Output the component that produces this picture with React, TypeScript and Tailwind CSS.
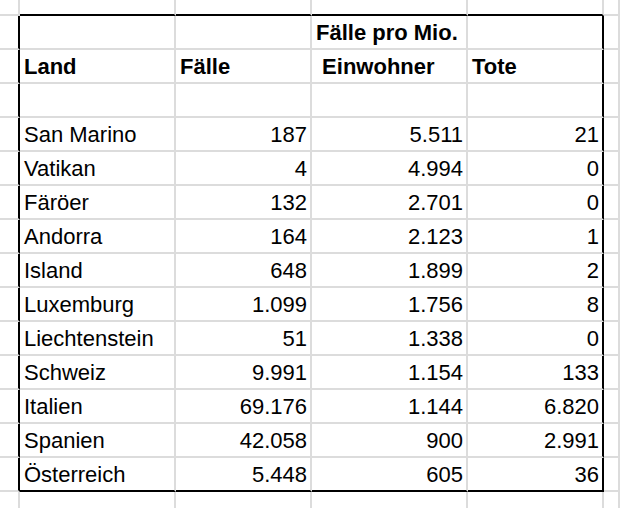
import React from "react";

// widths include the 2px right gridline of each column
const colWidths = ["w-[20px]", "w-[156px]", "w-[136px]", "w-[156px]", "w-[136px]", "flex-1"];

const rows: string[][] = [
  ["San Marino", "187", "5.511", "21"],
  ["Vatikan", "4", "4.994", "0"],
  ["Färöer", "132", "2.701", "0"],
  ["Andorra", "164", "2.123", "1"],
  ["Island", "648", "1.899", "2"],
  ["Luxemburg", "1.099", "1.756", "8"],
  ["Liechtenstein", "51", "1.338", "0"],
  ["Schweiz", "9.991", "1.154", "133"],
  ["Italien", "69.176", "1.144", "6.820"],
  ["Spanien", "42.058", "900", "2.991"],
  ["Österreich", "5.448", "605", "36"],
];

type CellProps = {
  col: number;
  height: string;
  bottomBlack?: boolean;
  rightBlack?: boolean;
  align?: "left" | "right";
  bold?: boolean;
  children?: React.ReactNode;
};

const Cell: React.FC<CellProps> = ({ col, height, bottomBlack, rightBlack, align = "left", bold, children }) => (
  <div
    className={[
      colWidths[col],
      height,
      "shrink-0 box-border flex items-end border-b-2 border-r-2 pb-[4px] whitespace-pre",
      bottomBlack ? "border-b-black" : "border-b-[#dcdcdc]",
      rightBlack ? "border-r-black" : "border-r-[#dcdcdc]",
      align === "right" ? "justify-end pr-[3px]" : "justify-start pl-[4px]",
      bold ? "font-bold" : "",
    ].join(" ")}
  >
    {children}
  </div>
);

const App: React.FC = () => {
  const header: string[][] = [
    ["", "", "Fälle pro Mio.", ""],
    ["Land", "Fälle", " Einwohner", "Tote"],
    ["", "", "", ""],
  ];

  return (
    <div
      className="w-[620px] h-[508px] overflow-hidden bg-white text-black text-[22px] leading-[22px]"
      style={{ fontFamily: '"Liberation Sans", Arial, sans-serif' }}
    >
      {/* partial row above the table */}
      <div className="flex">
        {[0, 1, 2, 3, 4, 5].map((c) => (
          <Cell key={c} col={c} height="h-[16px]" bottomBlack={c >= 1 && c <= 4} />
        ))}
      </div>

      {header.map((r, i) => (
        <div key={"h" + i} className="flex">
          <Cell col={0} height="h-[34px]" rightBlack />
          {r.map((t, c) => (
            <Cell key={c} col={c + 1} height="h-[34px]" rightBlack={c === 3} bold>
              {t}
            </Cell>
          ))}
          <Cell col={5} height="h-[34px]" />
        </div>
      ))}

      {rows.map((r, i) => {
        const last = i === rows.length - 1;
        return (
          <div key={r[0]} className="flex">
            <Cell col={0} height="h-[34px]" rightBlack />
            {r.map((t, c) => (
              <Cell
                key={c}
                col={c + 1}
                height="h-[34px]"
                rightBlack={c === 3}
                bottomBlack={last}
                align={c === 0 ? "left" : "right"}
              >
                {t}
              </Cell>
            ))}
            <Cell col={5} height="h-[34px]" />
          </div>
        );
      })}

      {/* partial row below */}
      <div className="flex">
        {[0, 1, 2, 3, 4, 5].map((c) => (
          <Cell key={c} col={c} height="h-[34px]" />
        ))}
      </div>
    </div>
  );
};

export default App;
